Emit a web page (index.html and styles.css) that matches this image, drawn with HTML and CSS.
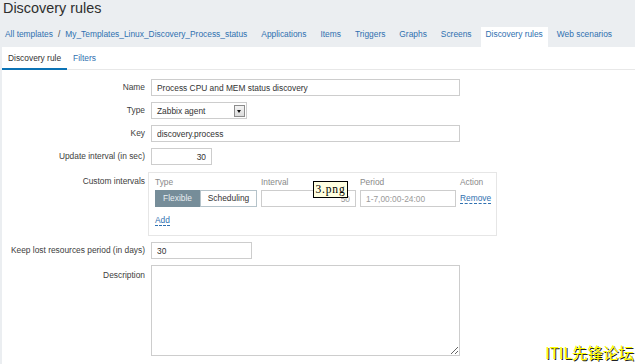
FILE: index.html
```html
<!DOCTYPE html>
<html lang="en">
<head>
    <meta charset="UTF-8">
    <meta name="viewport" content="width=device-width, initial-scale=1.0">
    <title>Discovery rules</title>
    <link rel="stylesheet" href="styles.css">
</head>
<body>
    <header class="page-header">
        <h1>Discovery rules</h1>
        <ul class="nav">
            <li class="crumbs"><a href="#">All templates</a><span class="sep">/</span><a href="#">My_Templates_Linux_Discovery_Process_status</a></li>
            <li><a href="#">Applications</a></li>
            <li><a href="#">Items</a></li>
            <li><a href="#">Triggers</a></li>
            <li><a href="#">Graphs</a></li>
            <li><a href="#">Screens</a></li>
            <li class="active"><a href="#">Discovery rules</a></li>
            <li><a href="#">Web scenarios</a></li>
        </ul>
    </header>

    <main class="panel">
        <ul class="tabs">
            <li class="current">Discovery rule</li>
            <li><a href="#">Filters</a></li>
        </ul>

        <form class="form">
            <label>Name</label>
            <input class="field wide" type="text" value="Process CPU and MEM status discovery">

            <label>Type</label>
            <div class="select">
                <span>Zabbix agent</span>
                <span class="select-arrow"></span>
            </div>

            <label>Key</label>
            <input class="field wide" type="text" value="discovery.process">

            <label>Update interval (in sec)</label>
            <input class="field short num" type="text" value="30">

            <label class="top">Custom intervals</label>
            <div class="intervals">
                <div class="col-head">Type</div>
                <div class="col-head">Interval</div>
                <div class="col-head">Period</div>
                <div class="col-head">Action</div>

                <div class="toggle">
                    <span class="on">Flexible</span>
                    <span>Scheduling</span>
                </div>
                <input class="field num" type="text" placeholder="50">
                <input class="field" type="text" placeholder="1-7,00:00-24:00">
                <a href="#" class="dashed">Remove</a>

                <a href="#" class="dashed add">Add</a>
            </div>

            <label>Keep lost resources period (in days)</label>
            <input class="field medium" type="text" value="30">

            <label class="top">Description</label>
            <textarea class="field wide notes"></textarea>
        </form>
    </main>

    <div class="tooltip">3.png</div>
    <div class="watermark">ITIL先锋论坛</div>
</body>
</html>
```

FILE: styles.css
```css
body {
    font-family: "Liberation Sans", Arial, sans-serif;
    font-size: 8.4px;
    margin: 0;
    padding: 0;
    background-color: #ebeef1; /* header gray */
    color: #3a3a3a;
    height: 364px;
    overflow: hidden;
}
a {
    color: #2f70b0;
    text-decoration: none;
}
.page-header h1 {
    margin: 0;
    padding: 0 3px;
    font-size: 14.4px;
    font-weight: normal;
    line-height: 17px;
    color: #2e2e2e;
}
.nav {
    display: flex;
    gap: 4px;
    margin: 10px 0 0 0;
    padding: 0;
    list-style: none;
}
.nav li {
    padding: 2px 5px 7px;
    line-height: 11px;
}
.nav li.active {
    background: #fff;
}
.nav .sep {
    margin: 0 5px;
    color: #444;
}
.panel {
    margin-left: 2px;
    background: #fff;
    height: 317px;
}
.tabs {
    display: flex;
    margin: 0;
    padding: 0;
    list-style: none;
    border-bottom: 1px solid #e8e8e8;
}
.tabs li {
    padding: 6px 6px 4px;
    line-height: 11px;
    border-bottom: 2px solid transparent;
    margin-bottom: -1px;
}
.tabs li.current {
    border-bottom-color: #0b73b5;
    color: #333;
}
.form {
    display: grid;
    grid-template-columns: 143px 1fr;
    column-gap: 6px;
    row-gap: 6px;
    padding-top: 9px;
    align-items: start;
    justify-items: start;
}
.form label {
    justify-self: stretch;
    text-align: right;
    line-height: 17px;
    color: #404040;
}
.form label.top {
    padding-top: 2px;
}
.field {
    box-sizing: border-box;
    height: 17px;
    border: 1px solid #cdcdcd;
    padding: 0 5px;
    font-family: inherit;
    font-size: 8.4px;
    color: #333;
    background: #fff;
    outline: none;
}
.field::placeholder {
    color: #9a9a9a;
}
.wide { width: 309px; }
.short { width: 61px; }
.medium { width: 101px; }
.num { text-align: right; }
.notes {
    height: 91px;
    resize: both;
}
.select {
    box-sizing: border-box;
    width: 96px;
    height: 17px;
    border: 1px solid #cdcdcd;
    display: flex;
    align-items: center;
    justify-content: space-between;
    padding: 0 1px 0 5px;
    color: #333;
}
.select-arrow {
    box-sizing: border-box;
    width: 11px;
    height: 12px;
    border: 1px solid #8c8c8c;
    background: linear-gradient(#f4f4f4, #dcdcdc);
    position: relative;
}
.select-arrow::after {
    content: "";
    position: absolute;
    left: 2px;
    top: 4px;
    border-left: 2.5px solid transparent;
    border-right: 2.5px solid transparent;
    border-top: 3px solid #111;
}
.intervals {
    box-sizing: border-box;
    margin: 1px 0 0 -3px;
    width: 349px;
    border: 1px solid #e6e6e6;
    padding: 4px 6px 9px;
    display: grid;
    grid-template-columns: 102px 95px 96px auto;
    column-gap: 4px;
    row-gap: 2px;
    align-items: center;
    justify-items: start;
}
.col-head {
    line-height: 11px;
    color: #8a8a8a;
}
.intervals .field {
    width: 100%;
}
.toggle {
    display: flex;
    height: 17px;
    width: 102px;
    line-height: 15px;
}
.toggle span {
    box-sizing: border-box;
    border: 1px solid #b5c3ca;
    text-align: center;
    width: 57px;
    color: #333;
}
.toggle span.on {
    width: 45px;
    background: #768d99;
    border-color: #768d99;
    color: #e8eef1;
}
.dashed {
    line-height: 10px;
    border-bottom: 1px dashed #2f70b0;
}
.add {
    grid-column: 1 / 2;
    margin-top: 6px;
}
.tooltip {
    position: absolute;
    left: 313px;
    top: 181px;
    width: 35px;
    height: 17px;
    box-sizing: border-box;
    border: 1px solid #000;
    background: #ffffe1;
    font-family: "Liberation Serif", serif;
    font-size: 11.5px;
    line-height: 15px;
    letter-spacing: 0.8px;
    text-align: center;
    color: #000;
}
.watermark {
    position: absolute;
    right: 1px;
    top: 342px;
    font-family: "Noto Sans CJK SC", sans-serif;
    font-size: 15.5px;
    line-height: 20px;
    color: #ffff00;
    text-shadow: 1px 1px 0 #222;
}
```
